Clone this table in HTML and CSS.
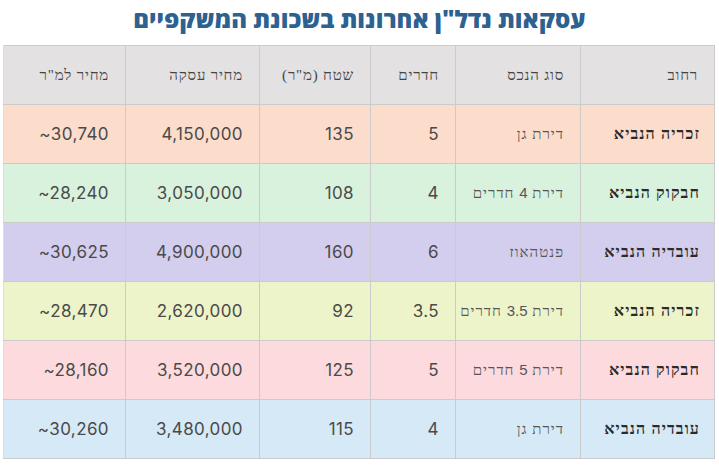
FILE: index.html
```html
<!DOCTYPE html>
<html lang="he" dir="rtl">
<head>
<meta charset="utf-8">
<title>עסקאות נדל"ן</title>
<link rel="stylesheet" href="styles.css">
</head>
<body>
<h1 class="title">עסקאות נדל"ן אחרונות בשכונת המשקפיים</h1>
<table class="deals">
  <colgroup>
    <col class="c-street"><col class="c-type"><col class="c-rooms"><col class="c-area"><col class="c-price"><col class="c-sqm">
  </colgroup>
  <thead>
    <tr>
      <th>רחוב</th><th>סוג הנכס</th><th>חדרים</th><th>שטח (מ"ר)</th><th>מחיר עסקה</th><th>מחיר למ"ר</th>
    </tr>
  </thead>
  <tbody>
    <tr class="r1"><td class="street">זכריה הנביא</td><td class="type">דירת גן</td><td class="num">5</td><td class="num">135</td><td class="num">4,150,000</td><td class="num"><span class="ltr">~30,740</span></td></tr>
    <tr class="r2"><td class="street">חבקוק הנביא</td><td class="type">דירת <span class="d">4</span> חדרים</td><td class="num">4</td><td class="num">108</td><td class="num">3,050,000</td><td class="num"><span class="ltr">~28,240</span></td></tr>
    <tr class="r3"><td class="street">עובדיה הנביא</td><td class="type">פנטהאוז</td><td class="num">6</td><td class="num">160</td><td class="num">4,900,000</td><td class="num"><span class="ltr">~30,625</span></td></tr>
    <tr class="r4"><td class="street">זכריה הנביא</td><td class="type">דירת <span class="d">3.5</span> חדרים</td><td class="num">3.5</td><td class="num">92</td><td class="num">2,620,000</td><td class="num"><span class="ltr">~28,470</span></td></tr>
    <tr class="r5"><td class="street">חבקוק הנביא</td><td class="type">דירת <span class="d">5</span> חדרים</td><td class="num">5</td><td class="num">125</td><td class="num">3,520,000</td><td class="num"><span class="ltr">~28,160</span></td></tr>
    <tr class="r6"><td class="street">עובדיה הנביא</td><td class="type">דירת גן</td><td class="num">4</td><td class="num">115</td><td class="num">3,480,000</td><td class="num"><span class="ltr">~30,260</span></td></tr>
  </tbody>
</table>
</body>
</html>
```
FILE: styles.css
```css
html, body {
  margin: 0;
  padding: 0;
  background: #ffffff;
}
body {
  width: 719px;
  height: 467px;
  overflow: hidden;
}
.title {
  margin: 0;
  height: 45px;
  line-height: 38px;
  text-align: center;
  font-family: "Open Sans", "DejaVu Sans", sans-serif;
  font-weight: 800;
  font-size: 24px;
  color: #2d6190;
}
.deals {
  margin-right: 4px;
  width: 711px;
  border-collapse: collapse;
  table-layout: fixed;
}
.c-street { width: 134px; }
.c-type { width: 125px; }
.c-rooms { width: 85px; }
.c-area { width: 111px; }
.c-price { width: 134px; }
.c-sqm { width: 122px; }
.deals th, .deals td {
  border: 1.5px solid #cbcbcb;
  text-align: right;
  padding: 0 16px 0 2px;
  height: 58px;
  white-space: nowrap;
}
.deals th:last-child, .deals td:last-child {
  border-left-color: #dedede;
}
.deals th {
  background: #e3e1e2;
  font-family: "Liberation Serif", "DejaVu Serif", serif;
  font-weight: normal;
  font-size: 15px;
  letter-spacing: 0.8px;
  color: #444;
}
.deals td.street {
  padding-right: 14px;
  font-family: "Liberation Serif", "DejaVu Serif", serif;
  font-weight: bold;
  font-size: 16px;
  letter-spacing: 1.1px;
  color: #2a2a2a;
}
.type {
  font-family: "Liberation Serif", "DejaVu Serif", serif;
  font-size: 15px;
  letter-spacing: 1px;
  color: #555;
}
.type .d {
  font-family: "Liberation Sans", sans-serif;
  font-size: 15px;
  letter-spacing: 0;
}
.num {
  font-family: "Inter", "Open Sans", sans-serif;
  font-size: 17px;
  letter-spacing: 0.4px;
  color: #4a4a4a;
}
.ltr {
  direction: ltr;
  unicode-bidi: isolate;
}
.r1 td { background: #fcdccb; }
.r2 td { background: #d9f2dd; }
.r3 td { background: #d3cdee; }
.r4 td { background: #eef4c9; }
.r5 td { background: #fcdadd; }
.r6 td { background: #d5e9f6; }
```
